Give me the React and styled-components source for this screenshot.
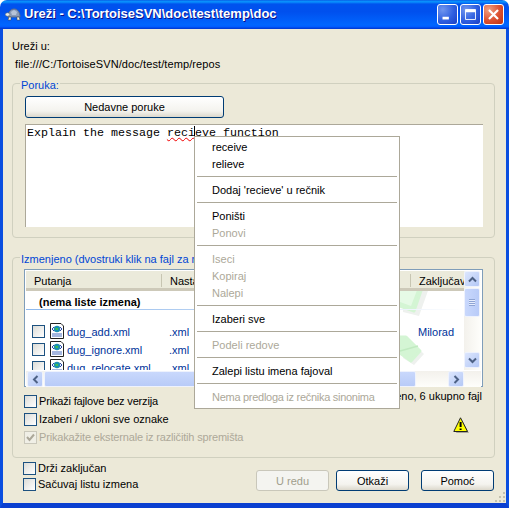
import styled, { createGlobalStyle } from 'styled-components';

const FONT = '"Liberation Sans", Arial, sans-serif';

const files = ['dug_add.xml', 'dug_ignore.xml', 'dug_relocate.xml'];

function Turtle() {
  return (
    <svg width="17" height="17" viewBox="0 0 17 17">
      <path d="M3 11 C3 6 6 3 9 3 C13 3 15 7 15 11 Z" fill="#8a9bb8" stroke="#5c6d8c" />
      <path d="M6 6 L9 4 L12 6 L11 9 L7 9 Z" fill="#b6c3d8" />
      <ellipse cx="2.5" cy="8.5" rx="2.2" ry="1.8" fill="#e8ebe6" stroke="#55606e" strokeWidth="0.5" />
      <path d="M4 11 L3 14 L6 14 L6 11 Z M12 11 L12 14 L15 14 L14 11 Z" fill="#f0f0e8" stroke="#444" strokeWidth="0.5" />
    </svg>
  );
}

function XmlIcon() {
  return (
    <svg width="16" height="16" viewBox="0 0 16 16">
      <path d="M1.5 .5 H12 L14.5 3 V15.5 H1.5 Z" fill="#fff" stroke="#222" />
      <path d="M3 11 H13 M3 13 H13" stroke="#4a6fc0" />
      <path d="M3 6 L5 4 M3 6 L5 8 M13 6 L11 4 M13 6 L11 8" stroke="#2a48a8" />
      <circle cx="8" cy="6" r="3.2" fill="#1b8fb0" />
      <path d="M6 5 H9 V7 H7 Z" fill="#3fbf4f" />
    </svg>
  );
}

function Warning() {
  return (
    <svg width="17" height="17" viewBox="0 0 17 17">
      <path d="M9 3 L16 16 H3 Z" fill="#a8a69a" />
      <path d="M7.5 .8 L14.5 14.5 H.8 Z" fill="#ffff00" stroke="#222" strokeLinejoin="round" />
      <path d="M7.6 5 V10 M7.6 11.5 V13" stroke="#000" strokeWidth="2" />
    </svg>
  );
}

function Arrow({ dir }) {
  const rot = { up: 0, down: 180, left: 270, right: 90 }[dir];
  return (
    <svg width="9" height="7" viewBox="0 0 9 7" style={{ transform: `rotate(${rot}deg)` }}>
      <path d="M1 5.5 L4.5 2 L8 5.5" fill="none" stroke="#4d6185" strokeWidth="2" />
    </svg>
  );
}

function Watermark() {
  return (
    <svg width="60" height="80" viewBox="0 0 60 80">
      <path d="M6 -6 H32 L22 22 L6 18 Z" fill="#eef1ee" transform="translate(3 3)" />
      <path d="M6 -6 H29 L20 20 L6 15 Z" fill="#d4f5d4" stroke="#d4f5d4" strokeWidth="3" strokeLinejoin="round" />
      <path d="M6 -6 H25 L17 15 L6 11 Z" fill="#e6fae6" />
      <path d="M6 46 L12 46 L27 60 L17 71 L6 64 Z" fill="#eef1ee" transform="translate(3 3)" />
      <path d="M6 46 L12 46 L26 60 L17 70 L6 62 Z" fill="#d4f5d4" stroke="#d4f5d4" strokeWidth="3" strokeLinejoin="round" />
      <path d="M6 60 L24 55" stroke="#c0eac0" strokeWidth="1.5" />
    </svg>
  );
}

function App() {
  return (
    <Page>
      <GlobalStyle />
      <TitleBar>
        <Turtle />
        <TitleText>Ureži - C:\TortoiseSVN\doc\test\temp\doc</TitleText>
        <Controls>
          <ControlButton>
            <svg width="21" height="21" viewBox="0 0 21 21">
              <rect x="5" y="13" width="7" height="3" fill="#fff" />
            </svg>
          </ControlButton>
          <ControlButton>
            <svg width="21" height="21" viewBox="0 0 21 21">
              <path d="M5 5 H16 V16 H5 Z" fill="none" stroke="#fff" />
              <rect x="5" y="5" width="11" height="3" fill="#fff" />
            </svg>
          </ControlButton>
          <ControlButton $close>
            <svg width="21" height="21" viewBox="0 0 21 21">
              <path d="M5.5 5.5 L15.5 15.5 M15.5 5.5 L5.5 15.5" stroke="#fff" strokeWidth="2.4" />
            </svg>
          </ControlButton>
        </Controls>
      </TitleBar>

      <Body>
        <Label>Ureži u:</Label>
        <RepoUrl>file:///C:/TortoiseSVN/doc/test/temp/repos</RepoUrl>

        <MessageGroup>
          <Legend>Poruka:</Legend>
          <WideButton>Nedavne poruke</WideButton>
          <MessageBox>
            Explain the message{' '}
            <Misspelled>
              reci
              <Caret />
              eve
            </Misspelled>{' '}
            function
          </MessageBox>
        </MessageGroup>

        <ChangesGroup>
          <Legend>Izmenjeno (dvostruki klik na fajl za r</Legend>
          <FileList>
            <ListTop>
              <ListMain>
                <WatermarkLayer>
                  <Watermark />
                </WatermarkLayer>
                <ListHeader>
                  <HeaderCell $width={136}>Putanja</HeaderCell>
                  <HeaderCell $width={249}>Nastavak</HeaderCell>
                  <HeaderCell $width={54} $last>
                    Zaključav
                  </HeaderCell>
                </ListHeader>
                <GroupRow>(nema liste izmena)</GroupRow>
                <GroupLine />
                {files.map((name, i) => (
                  <FileRow key={name}>
                    <Check />
                    <XmlIcon />
                    <FileName>{name}</FileName>
                    <FileExt>.xml</FileExt>
                    {i === 0 && <FileOwner>Milorad</FileOwner>}
                  </FileRow>
                ))}
              </ListMain>
              <VScroll>
                <ScrollButton>
                  <Arrow dir="up" />
                </ScrollButton>
                <VThumb>
                  <Grip />
                </VThumb>
                <ScrollGap />
                <ScrollButton>
                  <Arrow dir="down" />
                </ScrollButton>
              </VScroll>
            </ListTop>
            <HScroll>
              <ScrollButton>
                <Arrow dir="left" />
              </ScrollButton>
              <HThumb />
              <ScrollGap />
              <ScrollButton>
                <Arrow dir="right" />
              </ScrollButton>
            </HScroll>
          </FileList>

          <OptionsRow>
            <OptionColumn>
              <Option $narrow>
                <Check />
                Prikaži fajlove bez verzija
              </Option>
              <Option>
                <Check />
                Izaberi / ukloni sve oznake
              </Option>
              <Option $disabled $narrow>
                <Check $disabled>
                  <svg width="11" height="11" viewBox="0 0 11 11">
                    <path d="M2 5 L4.5 8 L9 2.5" fill="none" stroke="#aca899" strokeWidth="2" />
                  </svg>
                </Check>
                Prikakažite eksternale iz različitih spremišta
              </Option>
            </OptionColumn>
            <StatusColumn>
              <StatusText>eno, 6 ukupno fajl</StatusText>
              <WarningSlot>
                <Warning />
              </WarningSlot>
            </StatusColumn>
          </OptionsRow>
        </ChangesGroup>

        <Footer>
          <OptionColumn $tight>
            <Option>
              <Check />
              Drži zaključan
            </Option>
            <Option>
              <Check />
              Sačuvaj listu izmena
            </Option>
          </OptionColumn>
          <FooterButtons>
            <PushButton disabled>U redu</PushButton>
            <PushButton>Otkaži</PushButton>
            <PushButton $gap>Pomoć</PushButton>
          </FooterButtons>
        </Footer>
        <ResizeGrip>
          <svg width="12" height="12" viewBox="0 0 12 12">
            <path d="M9 1h2v2H9z M5 5h2v2H5z M9 5h2v2H9z M1 9h2v2H1z M5 9h2v2H5z M9 9h2v2H9z" fill="#c4c1ae" />
          </svg>
        </ResizeGrip>
      </Body>

      <ContextMenu>
        <MenuItem>receive</MenuItem>
        <MenuItem>relieve</MenuItem>
        <MenuLine />
        <MenuItem>Dodaj 'recieve' u rečnik</MenuItem>
        <MenuLine />
        <MenuItem>Poništi</MenuItem>
        <MenuItem $disabled>Ponovi</MenuItem>
        <MenuLine />
        <MenuItem $disabled>Iseci</MenuItem>
        <MenuItem $disabled>Kopiraj</MenuItem>
        <MenuItem $disabled>Nalepi</MenuItem>
        <MenuLine />
        <MenuItem>Izaberi sve</MenuItem>
        <MenuLine />
        <MenuItem $disabled>Podeli redove</MenuItem>
        <MenuLine />
        <MenuItem>Zalepi listu imena fajoval</MenuItem>
        <MenuLine />
        <MenuItem $disabled $narrow>
          Nema predloga iz rečnika sinonima
        </MenuItem>
      </ContextMenu>
    </Page>
  );
}

const GlobalStyle = createGlobalStyle`
  html, body {
    margin: 0;
    background: #fff;
  }
`;

const Page = styled.div`
  position: relative;
  width: 509px;
  height: 508px;
  overflow: hidden;
  display: flex;
  flex-direction: column;
  font: 11px/13px ${FONT};
  color: #000;
`;

const TitleBar = styled.div`
  height: 29px;
  flex: none;
  box-sizing: border-box;
  display: flex;
  align-items: center;
  padding: 0 5px 1px 5px;
  border-radius: 7px 7px 0 0;
  background: linear-gradient(
    #0a5fe6 0,
    #0997ff 6%,
    #0053ee 14%,
    #0050ee 40%,
    #0066ff 86%,
    #005bff 93%,
    #003dd7 97%,
    #003dd7 100%
  );
`;

const TitleText = styled.div`
  margin-left: 2px;
  flex: 1;
  color: #fff;
  font: bold 13px/16px ${FONT};
  text-shadow: 1px 1px #0f1089;
  white-space: nowrap;
`;

const Controls = styled.div`
  display: flex;
  gap: 2px;
`;

const ControlButton = styled.div`
  width: 21px;
  height: 21px;
  box-sizing: border-box;
  border: 1px solid #fff;
  border-radius: 3px;
  display: flex;
  align-items: center;
  justify-content: center;
  background: ${(p) =>
    p.$close
      ? 'radial-gradient(circle at 25% 25%, #f0a080, #dc5030 55%, #c03010)'
      : 'radial-gradient(circle at 25% 25%, #6f95ee, #2f5fe0 55%, #1a3fc4)'};
`;

const Body = styled.div`
  position: relative;
  flex: 1;
  box-sizing: border-box;
  background: #ece9d8;
  border-left: 3px solid #0a4ee0;
  border-right: 3px solid #0a4ee0;
  border-bottom: 5px solid #0a3fd0;
  padding: 11px 11px 0 9px;
`;

const Label = styled.div`
  height: 13px;
`;

const RepoUrl = styled.div`
  height: 13px;
  margin: 5px 0 0 3px;
  letter-spacing: 0.1px;
`;

const Group = styled.div`
  position: relative;
  box-sizing: border-box;
  border: 1px solid #d0d0bf;
  border-radius: 4px;
`;

const MessageGroup = styled(Group)`
  height: 155px;
  margin-top: 12px;
  padding: 12px 11px 0 12px;
`;

const ChangesGroup = styled(Group)`
  height: 201px;
  margin-top: 19px;
  padding: 11px 11px 0 11px;
`;

const Legend = styled.div`
  position: absolute;
  left: 7px;
  top: -5px;
  padding: 0 1px;
  background: #ece9d8;
  color: #0046d5;
  white-space: nowrap;
`;

const buttonFace = `
  box-sizing: border-box;
  border: 1px solid #003c74;
  border-radius: 3px;
  background: linear-gradient(#fff, #f4f3ee 70%, #dcd8cc);
  font: 11px/13px ${FONT};
  color: #000;
  padding: 1px 0 0;
`;

const WideButton = styled.button`
  ${buttonFace}
  display: block;
  width: 199px;
  height: 22px;
`;

const MessageBox = styled.div`
  box-sizing: border-box;
  height: 103px;
  margin-top: 6px;
  padding: 1px 0 0 1px;
  background: #fff;
  border-top: 1px solid #aca899;
  border-left: 1px solid #aca899;
  font: 11.67px/14px "Liberation Mono", monospace;
  white-space: pre-wrap;
`;

const Misspelled = styled.span`
  text-decoration: underline wavy #f00000 1px;
`;

const Caret = styled.span`
  display: inline-block;
  width: 0;
  height: 14px;
  margin-left: -1px;
  border-left: 1px solid #000;
  vertical-align: top;
`;

const FileList = styled.div`
  box-sizing: border-box;
  width: 459px;
  height: 118px;
  border: 1px solid #7f9db9;
  padding: 1px;
  background: #fff;
`;

const ListTop = styled.div`
  display: flex;
  height: 99px;
`;

const ListMain = styled.div`
  position: relative;
  flex: 1;
  overflow: hidden;
`;

const WatermarkLayer = styled.div`
  position: absolute;
  left: 368px;
  top: 20px;
`;

const ListHeader = styled.div`
  position: relative;
  display: flex;
  height: 20px;
  box-sizing: border-box;
  background: #ebeadb;
  border-bottom: 3px solid #cdc9b9;
`;

const HeaderCell = styled.div`
  flex: none;
  width: ${(p) => p.$width - 9}px;
  height: 12px;
  margin-top: 3px;
  padding: 1px 0 0 8px;
  overflow: hidden;
  white-space: nowrap;
  border-right: ${(p) => (p.$last ? 'none' : '1px solid #c7c5b2')};
`;

const GroupRow = styled.div`
  position: relative;
  margin: 5px 0 0 13px;
  height: 13px;
  font-weight: bold;
`;

const GroupLine = styled.div`
  position: relative;
  height: 1px;
  margin: 0 0 12px;
  background: linear-gradient(90deg, #8db8ec, #c9dcf5 60%, #fff);
`;

const FileRow = styled.div`
  position: relative;
  display: flex;
  align-items: center;
  height: 18px;
  padding-left: 6px;
  color: #00339a;
  & > svg {
    margin-left: 4px;
    flex: none;
  }
  & > span:not(:first-child) {
    margin-top: 2px;
  }
`;

const FileName = styled.span`
  width: 102px;
  margin-left: 2px;
  white-space: nowrap;
`;

const FileExt = styled.span`
  width: 249px;
`;

const FileOwner = styled.span``;

const Check = styled.span`
  flex: none;
  display: inline-flex;
  align-items: center;
  justify-content: center;
  width: 13px;
  height: 13px;
  box-sizing: border-box;
  border: 1px solid ${(p) => (p.$disabled ? '#cac8bb' : '#1c5180')};
  background: ${(p) =>
    p.$disabled ? '#f0efe6' : 'linear-gradient(135deg, #dcdcd7, #fff)'};
`;

const VScroll = styled.div`
  flex: none;
  width: 17px;
  display: flex;
  flex-direction: column;
  box-sizing: border-box;
  padding: 0 1px 2px 0;
  gap: 1px;
  background: linear-gradient(90deg, #f3f1ec, #fefefb);
`;

const ScrollButton = styled.div`
  flex: none;
  width: 16px;
  height: 16px;
  box-sizing: border-box;
  border: 1px solid #eef2fd;
  border-radius: 2px;
  display: flex;
  align-items: center;
  justify-content: center;
  background: linear-gradient(135deg, #dce6fd, #b4c8f6);
`;

const ScrollGap = styled.div`
  flex: 1;
`;

const VThumb = styled.div`
  flex: none;
  height: 29px;
  width: 16px;
  box-sizing: border-box;
  border: 1px solid #eef2fd;
  border-radius: 2px;
  background: linear-gradient(90deg, #c9d8fc, #b8cbf8);
  display: flex;
  align-items: center;
  justify-content: center;
`;

const Grip = styled.div`
  width: 6px;
  height: 7px;
  background: repeating-linear-gradient(#8ea4d4 0 1px, #e6edfd 1px 2px);
`;

const HScroll = styled.div`
  display: flex;
  height: 16px;
  box-sizing: border-box;
  margin-top: 1px;
  padding-right: 17px;
  padding-left: 1px;
  gap: 1px;
  background: linear-gradient(#f3f1ec, #fefefb);
`;

const HThumb = styled.div`
  flex: none;
  width: 372px;
  height: 16px;
  box-sizing: border-box;
  border: 1px solid #eef2fd;
  border-radius: 2px;
  background: linear-gradient(#c9d8fc, #b8cbf8);
`;

const OptionsRow = styled.div`
  display: flex;
  justify-content: space-between;
  margin-top: 8px;
`;

const OptionColumn = styled.div`
  display: flex;
  flex-direction: column;
  gap: ${(p) => (p.$tight ? 3 : 5)}px;
`;

const Option = styled.div`
  display: flex;
  align-items: center;
  gap: 2px;
  height: 13px;
  white-space: nowrap;
  color: ${(p) => (p.$disabled ? '#aca899' : '#000')};
  letter-spacing: ${(p) => (p.$narrow ? '-0.17px' : 'normal')};
`;

const StatusColumn = styled.div`
  display: flex;
  flex-direction: column;
  align-items: flex-end;
  margin-right: 1px;
`;

const StatusText = styled.div`
  height: 13px;
  margin-top: -5px;
  white-space: nowrap;
`;

const WarningSlot = styled.div`
  margin: 14px 12px 0 0;
  height: 17px;
`;

const Footer = styled.div`
  display: flex;
  justify-content: space-between;
  align-items: flex-end;
  margin: 3px 0 0 11px;
  padding-right: 1px;
  height: 30px;
`;

const FooterButtons = styled.div`
  display: flex;
  gap: 7px;
`;

const PushButton = styled.button`
  ${buttonFace}
  width: 73px;
  height: 21px;
  margin-left: ${(p) => (p.$gap ? 5 : 0)}px;
  &:disabled {
    border-color: #c9c7ba;
    background: #f4f4f0;
    color: #a19e8c;
  }
`;

const ResizeGrip = styled.div`
  position: absolute;
  right: 0;
  bottom: 0;
  width: 12px;
  height: 12px;
`;

const ContextMenu = styled.div`
  position: absolute;
  left: 194px;
  top: 136px;
  width: 206px;
  height: 273px;
  box-sizing: border-box;
  padding: 2px;
  background: #fff;
  border: 1px solid #aca899;
`;

const MenuItem = styled.div`
  height: 17px;
  line-height: 17px;
  padding-left: 15px;
  white-space: nowrap;
  color: ${(p) => (p.$disabled ? '#aca899' : '#000')};
  letter-spacing: ${(p) => (p.$narrow ? '-0.28px' : 'normal')};
`;

const MenuLine = styled.div`
  height: 1px;
  margin: 3px 0 5px;
  background: #aca899;
`;

export default App;
